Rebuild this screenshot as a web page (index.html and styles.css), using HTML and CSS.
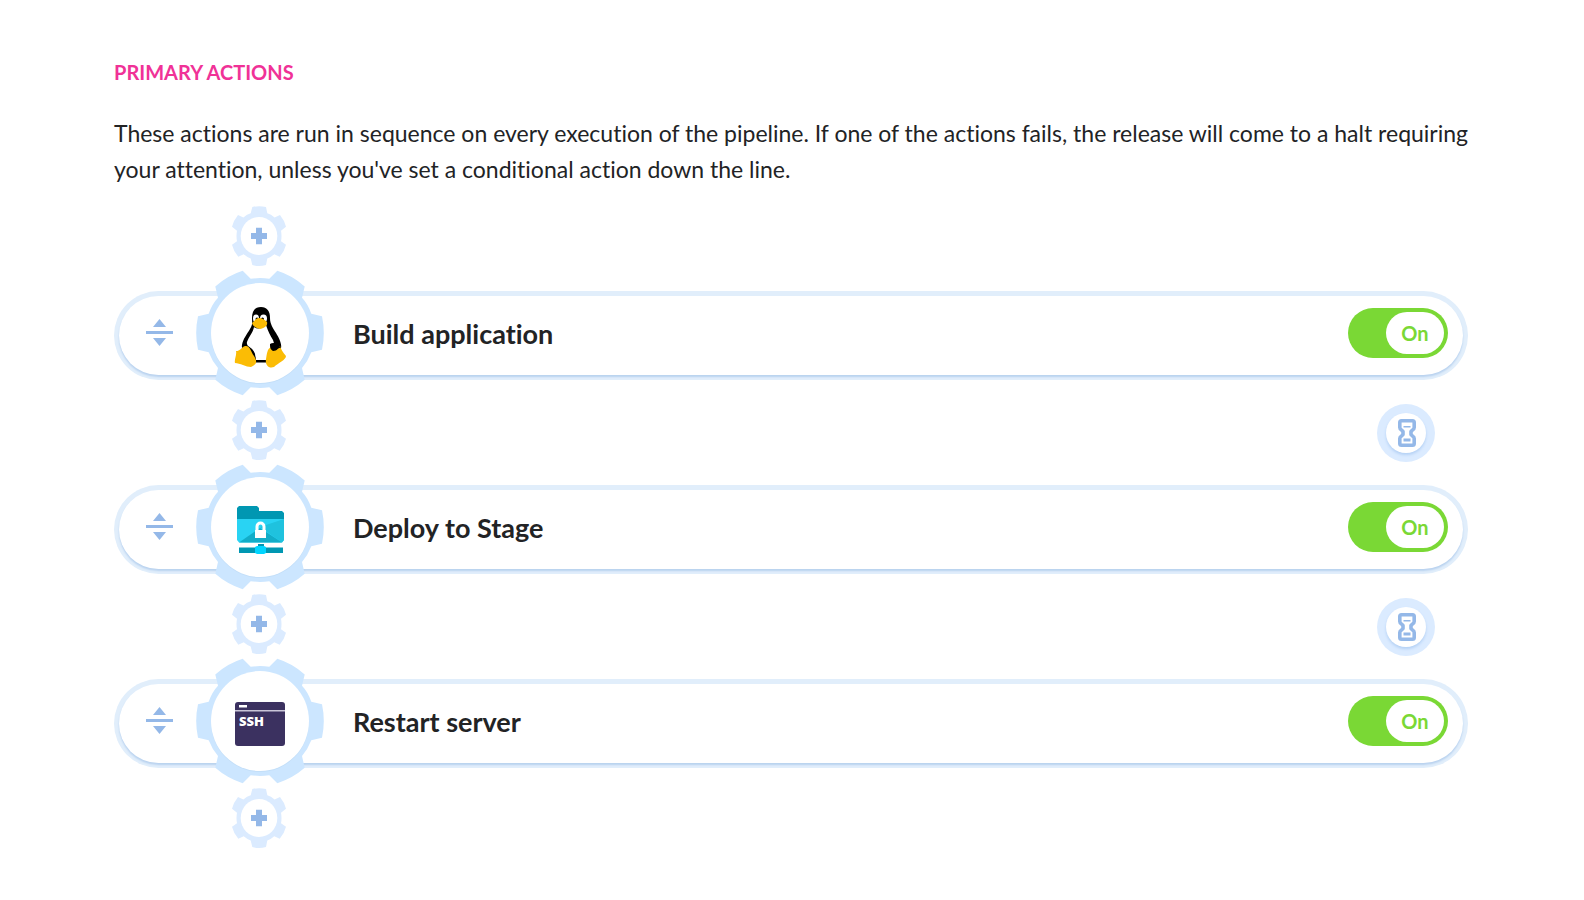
FILE: index.html
```html
<!DOCTYPE html>
<html lang="en">

<head>
	<meta charset="UTF-8" />
	<meta name="viewport" content="width=device-width, initial-scale=1.0" />
	<title>Pipeline actions</title>
	<link rel="stylesheet" href="styles.css">
</head>

<body>
	<!-- shared shapes -->
	<svg class="sprite" aria-hidden="true">
		<symbol id="gear" viewBox="-64 -63 128 126">
			<path fill="#cce6ff" d="M-17.3-62.2L-9.3-54.2Q0-55.6 9.3-54.2L17.3-62.2Q32.5-57.5 44.7-46.5L42-35.3Q48-29 51.3-19.3L62-16.7Q65.6 0 62 16.7L51.3 19.3Q48 28 42 34.9L44.7 46.8Q32.5 57.5 17.3 62.2L9.3 54.2Q0 55.6-9.3 54.2L-17.3 62.2Q-32.5 57.5-44.7 46.8L-42 34.9Q-48 28-51.3 19.3L-62 16.7Q-65.6 0-62-16.7L-51.3-19.3Q-48-29-42-35.3L-44.7-46.5Q-32.5-57.5-17.3-62.2Z" />
			<ellipse cy="1" rx="49" ry="50" fill="#c3dff9" />
			<ellipse rx="49" ry="50" fill="#fff" />
		</symbol>
		<symbol id="gear-add" viewBox="-27 -30 54 60">
			<path fill="#dbebff" d="M-6.7-28.9Q0-30.8 7-28.9L8.3-22.7Q12-21.6 15.6-18.6L21-21Q25.5-15.5 27-9.3L22-5.3Q23 0 22 5.3L27 8.7Q25.5 15 20.7 20.7L15.3 18.3Q12 21.2 8.3 22.5L7 29Q0 30.8-6.7 29L-8.3 22.5Q-12 21.2-15.3 18.3L-20.7 20.7Q-25.5 15-27 8.7L-22 5.3Q-23 0-22-5.3L-27-9.3Q-25.5-15.5-21-21L-15.6-18.6Q-12-21.6-8.3-22.7Z" />
			<ellipse rx="18.3" ry="19" fill="#fff" />
			<path fill="#94b8e8" d="M-3-8.3H3V-3H8V3H3V8.3H-3V3H-8V-3H-3Z" />
		</symbol>
		<symbol id="drag" viewBox="0 0 27 27">
			<path fill="#94b8e8" d="M13.5 0L20 8H7ZM0 12H27V15H0ZM7 19H20L13.5 27Z" />
		</symbol>
		<symbol id="hourglass" viewBox="0 0 18 28">
			<path fill="none" stroke="#94b8e8" stroke-width="3.6" stroke-linejoin="round" d="M3.5 1.8H14.5Q16.2 1.8 16.2 3.5V8.5Q16.2 10 14.5 11L13 12.5V15.5L14.5 17Q16.2 18 16.2 19.5V24.5Q16.2 26.2 14.5 26.2H3.5Q1.8 26.2 1.8 24.5V19.5Q1.8 18 3.5 17L5 15.5V12.5L3.5 11Q1.8 10 1.8 8.5V3.5Q1.8 1.8 3.5 1.8Z" />
			<path fill="#94b8e8" d="M5.5 7H12.5V8.5H5.5ZM5.5 19.5H12.5V22.5H5.5Z" />
		</symbol>
	</svg>

	<main class="actions">
		<h2 class="actions-title">PRIMARY ACTIONS</h2>
		<p class="actions-text">These actions are run in sequence on every execution of the pipeline. If one of the actions fails, the release will come to a halt requiring your attention, unless you've set a conditional action down the line.</p>

		<div class="connector">
			<button class="add-button" aria-label="Add action"><svg><use href="#gear-add" /></svg></button>
		</div>

		<div class="action">
			<div class="action-body">
				<button class="drag-button" aria-label="Move action"><svg><use href="#drag" /></svg></button>
				<svg class="action-icon" viewBox="-64 -63 128 126">
					<use href="#gear" x="-64" y="-63" width="128" height="126" />
					<!-- penguin -->
					<path d="M-8-15C-8-22-5-26 1-26C7-26 10-22 10-15C10-9 13-5 16 0C19 5 22 11 21 15C20 20 15 25 11 29H-9C-14 25-19 18-18 12C-17 6-13 1-10-4C-7-9-8-11-8-15Z" />
					<path fill="#fff" d="M-6-6Q-1-2 6-8C8-2 10 2 13 7C15 12 14 15 11 17L7 27H-4L-6 19C-10 16-14 12-13 9C-11 3-7 0-6-6Z" />
					<ellipse cx="-4" cy="-14.5" rx="3" ry="4" fill="#fff" />
					<ellipse cx="3.5" cy="-14.5" rx="3.5" ry="4" fill="#fff" />
					<circle cx="-3" cy="-14" r="1.5" />
					<circle cx="2.5" cy="-14" r="1.5" />
					<path fill="#fbbc05" d="M-8-10C-5-12-4-15-1-15C2-15 5-13 7-11C8-7 4-5 0-4C-3-5-7-6-8-10Z" />
					<path d="M-14 12Q-7 15-5 21L-4 28H-12ZM-5 27Q1 28 7 27V29.5H-5Z" />
					<path fill="#fbbc05" d="M-24 18C-19 18-17 12-14 13C-10 13-9 19-6 23C-2 29-4 32-9 34C-14 34-20 30-25 30C-26 27-23 22-24 18ZM11 14L20 13C21 16 23 20 26 23C26 27 18 30 14 34C8 36 5 31 6 26C7 21 7 16 11 14Z" />
					<path d="M10 11C13 9 18 10 21 15C18 14 18 18 13 18C10 16 10 14 10 11Z" />
				</svg>
				<h3 class="action-name">Build application</h3>
				<label class="toggle">
					<input type="checkbox" checked aria-label="Build application">
					<span class="toggle-knob">On</span>
				</label>
			</div>
		</div>

		<div class="connector">
			<button class="add-button" aria-label="Add action"><svg><use href="#gear-add" /></svg></button>
			<button class="wait-button" aria-label="Wait"><svg><use href="#hourglass" /></svg></button>
		</div>

		<div class="action">
			<div class="action-body">
				<button class="drag-button" aria-label="Move action"><svg><use href="#drag" /></svg></button>
				<svg class="action-icon" viewBox="-64 -63 128 126">
					<use href="#gear" x="-64" y="-63" width="128" height="126" />
					<!-- locked folder -->
					<path fill="#0097b2" d="M-21-21H-3L-1-19V-16H22L24-14V-7H-23V-19Z" />
					<path fill="#29d3f3" d="M-23-8H24V13L22 15.5H-21L-23 13Z" />
					<path fill="#1fc2de" d="M24-8V13L22 15.5L0 0Z" />
					<path fill="#12adc8" d="M-21 15.5L0 1L22 15.5Z" />
					<path fill="none" stroke="#fff" stroke-width="3" d="M-3 4V-0.5A3.5 3.5 0 0 1 4 -0.5V4" />
					<path fill="#fff" d="M-5 3H6V11H-5Z" />
					<path fill="#0097b2" d="M-2 17H4V20H-2ZM-21 20.5H23V26H-21Z" />
					<path fill="#00d5ff" d="M-5 20L-3 19H4L6 20V26L4 27H-3L-5 26Z" />
				</svg>
				<h3 class="action-name">Deploy to Stage</h3>
				<label class="toggle">
					<input type="checkbox" checked aria-label="Deploy to Stage">
					<span class="toggle-knob">On</span>
				</label>
			</div>
		</div>

		<div class="connector">
			<button class="add-button" aria-label="Add action"><svg><use href="#gear-add" /></svg></button>
			<button class="wait-button" aria-label="Wait"><svg><use href="#hourglass" /></svg></button>
		</div>

		<div class="action">
			<div class="action-body">
				<button class="drag-button" aria-label="Move action"><svg><use href="#drag" /></svg></button>
				<svg class="action-icon" viewBox="-64 -63 128 126">
					<use href="#gear" x="-64" y="-63" width="128" height="126" />
					<!-- terminal window -->
					<rect x="-25" y="-19" width="50" height="44" rx="3" fill="#3b3160" />
					<path fill="#fff" d="M-21-16H-13V-13.5H-21Z" />
					<path fill="#c9c5d8" d="M-25-11H25V-9.5H-25Z" />
					<text class="ssh" x="-21" y="5">SSH</text>
				</svg>
				<h3 class="action-name">Restart server</h3>
				<label class="toggle">
					<input type="checkbox" checked aria-label="Restart server">
					<span class="toggle-knob">On</span>
				</label>
			</div>
		</div>

		<div class="connector">
			<button class="add-button" aria-label="Add action"><svg><use href="#gear-add" /></svg></button>
		</div>
	</main>
</body>

</html>
```

FILE: styles.css
```css
* {
	box-sizing: border-box;
}

body {
	margin: 0;
	background: #fff;
	color: #222325;
	font-family: Lato, "Liberation Sans", sans-serif;
	font-variant-ligatures: none;
}

button {
	padding: 0;
	border: none;
	background: none;
	cursor: pointer;
}

svg {
	display: block;
}

.sprite {
	position: absolute;
	width: 0;
	height: 0;
}

.actions {
	padding: 57px 116px 0 114px;
}

.actions-title {
	margin: 0 0 28px;
	color: #f03297;
	font-size: 20px;
	line-height: 30px;
}

.actions-text {
	margin: 0 -8px -1px 0;
	font-size: 23px;
	line-height: 36px;
}

/* connector */
.connector {
	display: flex;
	align-items: flex-end;
	justify-content: space-between;
	padding: 20px 33px 25px 118px;
}

.add-button svg {
	width: 54px;
	height: 60px;
}

.wait-button {
	margin-bottom: -2px;
	padding: 9px;
	border-radius: 50%;
	background: #dbebff;
}

.wait-button svg {
	width: 40px;
	height: 40px;
	padding: 6px 10px 6px 12px;
	border-radius: 50%;
	background: #fff;
	box-shadow: 0 2px 3px #b4d1f5;
	overflow: visible;
}

/* action */
.action {
	padding: 5px;
	border-radius: 45px;
	background: #e1eefb;
}

.action-body {
	display: flex;
	align-items: center;
	height: 79px;
	padding: 0 15px 6px 27px;
	border-radius: 40px;
	background: #fff;
	box-shadow: 0 2px 2px #b9d2ef;
}

.drag-button svg {
	width: 27px;
	height: 27px;
}

.action-icon {
	flex: none;
	width: 128px;
	height: 126px;
	margin: -24px 29px -24px 23px;
}

.ssh {
	fill: #fff;
	font: 800 13px "Open Sans", sans-serif;
}

.action-name {
	flex: 1;
	margin: 0;
	padding-top: 2px;
	font-size: 27px;
	line-height: 36px;
}

/* toggle */
.toggle {
	display: flex;
	justify-content: flex-end;
	width: 100px;
	height: 50px;
	padding: 4px;
	border-radius: 25px;
	background: #7ad835;
	cursor: pointer;
}

.toggle input {
	position: absolute;
	opacity: 0;
}

.toggle-knob {
	width: 58px;
	border-radius: 21px;
	background: #fff;
	color: #7ad835;
	font-size: 20px;
	font-weight: bold;
	line-height: 42px;
	text-align: center;
}
```
